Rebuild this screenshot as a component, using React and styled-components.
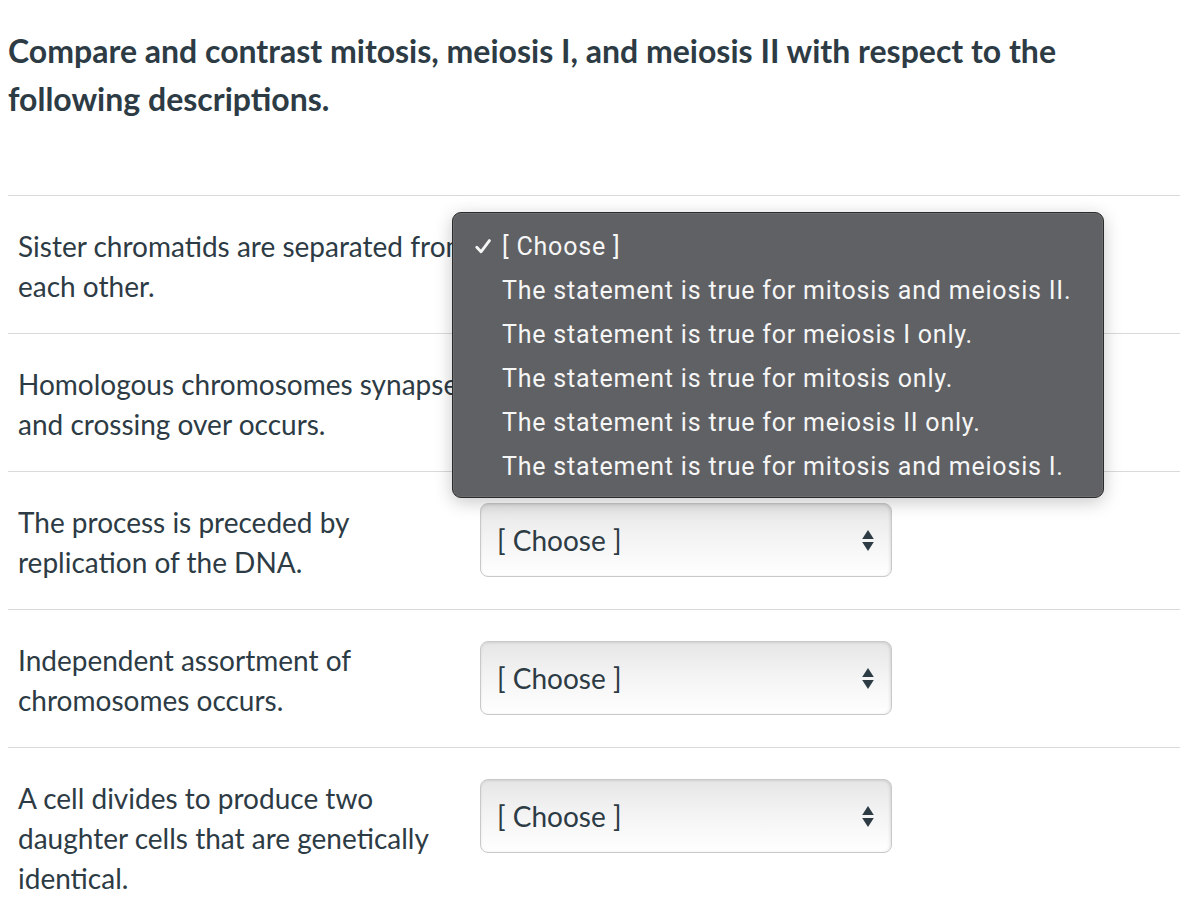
import React from "react"
import styled, { createGlobalStyle } from "styled-components"

/*-----------STYLES ------------*/

const GlobalStyle = createGlobalStyle`
  body {
    margin: 8px;
    background: #fff;
    font-family: Lato, "Open Sans", sans-serif;
    color: #2d3b45;
  }
`

const Heading = styled.h2`
  margin: 19px 0 0;
  font-size: 32px;
  line-height: 48px;
  font-weight: 700;
  color: #2d3b45;
`

const List = styled.div`
  margin: 72px 10px 0 0;
  border-top: 1px solid #dadada;
`

const Row = styled.div`
  display: grid;
  grid-template-columns: 452px 412px;
  column-gap: 10px;
  align-items: start;
  padding: 30px 10px 27px;
  border-bottom: ${props => (props.last ? "none" : "1px solid #dadada")};
`

const Statement = styled.div`
  font-size: 28px;
  line-height: 40px;
`

const SelectCell = styled.div`
  position: relative;
  padding-top: 1px;
`

const SelectBox = styled.div`
  display: flex;
  align-items: center;
  justify-content: space-between;
  box-sizing: border-box;
  height: 74px;
  padding: 0 17px 0 16px;
  border: 1px solid #c9c9c9;
  border-radius: 8px;
  background: linear-gradient(180deg, #e6e6e6 0%, #f3f3f3 45%, #ffffff 100%);
  box-shadow: inset 0 1px 3px rgba(0, 0, 0, 0.08), inset -2px 0 3px rgba(0, 0, 0, 0.05);
  font-size: 28px;
  color: #2d3b45;
`

const Arrows = styled.svg`
  width: 12px;
  height: 23px;
`

const Popup = styled.div`
  position: absolute;
  top: -14px;
  left: -28px;
  width: 652px;
  box-sizing: border-box;
  padding: 11px 0 9px;
  background: #606164;
  border: 1px solid #2b2b2b;
  border-radius: 9px;
  box-shadow: 0 4px 18px rgba(0, 0, 0, 0.22), inset 0 0 0 1px rgba(255, 255, 255, 0.08);
  z-index: 2;
`

const Option = styled.div`
  display: grid;
  grid-template-columns: 49px auto;
  height: 44px;
  align-items: center;
  font-family: Roboto, "Liberation Sans", sans-serif;
  font-size: 25px;
  letter-spacing: 0.8px;
  color: #f6f6f6;
`

const Check = styled.svg`
  justify-self: end;
  margin-right: 11px;
  width: 16px;
  height: 15px;
`

/*-----------END STYLES ------------*/

const options = [
  "[ Choose ]",
  "The statement is true for mitosis and meiosis II.",
  "The statement is true for meiosis I only.",
  "The statement is true for mitosis only.",
  "The statement is true for meiosis II only.",
  "The statement is true for mitosis and meiosis I.",
]

const statements = [
  "Sister chromatids are separated from each other.",
  "Homologous chromosomes synapse and crossing over occurs.",
  "The process is preceded by replication of the DNA.",
  "Independent assortment of chromosomes occurs.",
  "A cell divides to produce two daughter cells that are genetically identical.",
]

function ArrowIcon() {
  return (
    <Arrows viewBox="0 0 12 23">
      <path d="M6 1 L11.8 10 H0.2 Z" fill="#2d3b45" />
      <path d="M6 22 L11.8 13 H0.2 Z" fill="#2d3b45" />
    </Arrows>
  )
}

function CheckIcon() {
  return (
    <Check viewBox="0 0 16 15">
      <path
        d="M1.8 8.2 L6 12.8 L14.4 1.6"
        fill="none"
        stroke="#f6f6f6"
        strokeWidth="2.8"
        strokeLinecap="round"
        strokeLinejoin="round"
      />
    </Check>
  )
}

function App() {
  return (
    <>
      <GlobalStyle />
      <Heading>
        Compare and contrast mitosis, meiosis I, and meiosis II with respect to the following
        descriptions.
      </Heading>
      <List>
        {statements.map((text, i) => (
          <Row key={text} last={i === statements.length - 1}>
            <Statement>{text}</Statement>
            <SelectCell>
              <SelectBox>
                <span>[ Choose ]</span>
                <ArrowIcon />
              </SelectBox>
              {i === 0 && (
                <Popup>
                  {options.map((opt, j) => (
                    <Option key={opt}>
                      {j === 0 ? <CheckIcon /> : <span />}
                      <span>{opt}</span>
                    </Option>
                  ))}
                </Popup>
              )}
            </SelectCell>
          </Row>
        ))}
      </List>
    </>
  )
}

export default App
